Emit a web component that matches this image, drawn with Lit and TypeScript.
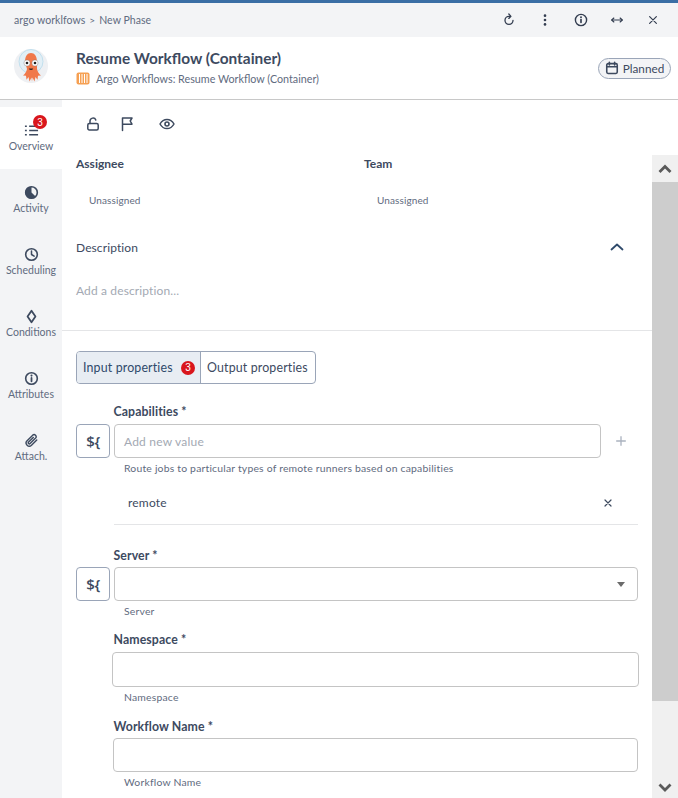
import { LitElement, html, css, svg } from "lit";
import { customElement } from "lit/decorators.js";

const I = (body: unknown, size = 16, cls = "") => html`<svg class=${cls} width=${size} height=${size} viewBox="0 0 16 16" fill="none" stroke="currentColor" stroke-width="1.5" stroke-linecap="round" stroke-linejoin="round">${body}</svg>`;

const navItems = [
  { label: "Overview", active: true, badge: true, icon: svg`<path d="M5.500 3.500h9.500M5.500 8h9.500M5.500 12.500h9.500" stroke-width="1.700" stroke-linecap="butt"/><path d="M1 3.500h2M1 8h2M1 12.500h2" stroke-width="1.700" stroke-linecap="butt"/>` },
  { label: "Activity", icon: svg`<circle cx="8" cy="8" r="6.200" stroke-width="1.700"/><path d="M8 8V1.800A6.200 6.200 0 0 0 4 13 6.200 6.200 0 0 0 12.400 12.300z" fill="currentColor" stroke="none"/>` },
  { label: "Scheduling", icon: svg`<circle cx="8" cy="8" r="6.200" stroke-width="1.700"/><path d="M8 4.200V8l2.800 1.800" stroke-width="1.600"/>` },
  { label: "Conditions", icon: svg`<path d="M8 1.800 12.200 8 8 14.200 3.800 8z" stroke-width="1.900"/>` },
  { label: "Attributes", icon: svg`<circle cx="8" cy="8" r="6.200" stroke-width="1.700"/><path d="M8 7.400v3.600" stroke-width="1.900"/><circle cx="8" cy="4.900" r="1.100" fill="currentColor" stroke="none"/>` },
  { label: "Attach.", icon: svg`<path d="M13.600 7.400 8 13a3.300 3.300 0 0 1-4.700-4.700l6-6a2.200 2.200 0 0 1 3.100 3.100l-5.900 5.900a1.100 1.100 0 0 1-1.600-1.600l5-5" stroke-width="1.500"/>` },
];

@customElement("app-root")
export class AppRoot extends LitElement {
  static styles = css`
    :host { display: block; width: 678px; height: 798px; overflow: hidden; font-family: Lato, "Open Sans", sans-serif; color: #3d4a5f; background: #fff; }
    * { box-sizing: border-box; }
    svg { display: block; }
    .accent { height: 3px; background: #3a6ea5; }
    .crumbs { height: 34px; background: #f3f4f6; display: flex; align-items: center; padding-left: 14px; font-size: 10.5px; color: #5f6b80; letter-spacing: .05px; }
    .crumbs .sep { margin: 0 4px; font-size: 10px; }
    .top-icons { margin-left: auto; display: flex; align-items: center; color: #333d50; padding-right: 7px; }
    .top-icons span { width: 36px; display: flex; justify-content: center; }
    .header { height: 63px; border-bottom: 1px solid #c8c8c8; display: flex; align-items: center; position: relative; }
    .logo { margin-left: 14px; width: 34px; height: 34px; margin-top: -4px; }
    .titles { margin-left: 28px; margin-top: -2px; }
    .title { font-size: 15.4px; font-weight: 700; color: #3d4a5f; line-height: 20px; }
    .sub { display: flex; align-items: center; gap: 5px; font-size: 10.75px; color: #5f6b80; line-height: 16px; margin-top: 3px; }
    .pill { margin-left: auto; margin-right: 7px; width: 73px; height: 21px; border: 1px solid #9aa5b8; border-radius: 11px; background: #f3f4f6; display: flex; align-items: center; justify-content: center; gap: 4px; font-size: 11.75px; color: #3d4a5f; }
    .pill svg { stroke-width: 1.8; }
    .body { display: flex; height: 698px; }
    .side { width: 62px; background: #f3f4f6; padding-top: 7px; flex: none; }
    .nav { height: 62px; display: flex; flex-direction: column; align-items: center; padding-top: 16px; font-size: 10.5px; color: #5f6b80; position: relative; }
    .nav svg { color: #3d4a5f; margin-bottom: 2px; }
    .nav.active { background: #fff; }
    .nav-badge { position: absolute; left: 33px; top: 8px; }
    .badge { width: 14px; height: 14px; border-radius: 50%; background: #d9161c; color: #fff; font-size: 10px; display: flex; align-items: center; justify-content: center; font-family: "Liberation Sans", sans-serif; }
    .main { flex: 1; min-width: 0; display: flex; flex-direction: column; }
    .actions { height: 55px; flex: none; display: flex; align-items: center; padding: 0 0 7px 23px; color: #3d4a5f; gap: 18px; }
    .actions svg:last-child { margin-left: 6px; }
    .split { flex: 1; min-height: 0; display: flex; }
    .content { flex: 1; min-width: 0; overflow: hidden; }
    .people { display: flex; padding: 2px 0 0 14px; height: 84px; }
    .people > div { width: 288.5px; }
    .h { font-size: 12px; font-weight: 700; color: #3d4a5f; line-height: 14px; }
    .un { font-size: 10px; color: #5f6b80; padding: 22px 0 0 13px; line-height: 14px; letter-spacing: .1px; }
    .desc-row { display: flex; align-items: center; justify-content: space-between; padding: 0 27px 0 14px; height: 16px; font-size: 12px; color: #3d4a5f; letter-spacing: .1px; }
    .desc-row svg { color: #2f4a6b; }
    .add { font-size: 12px; color: #a3a9b3; padding-left: 14px; margin-top: 28px; line-height: 16px; height: 47px; letter-spacing: .13px; }
    .divider { height: 1px; background: #e4e5e7; }
    .tabs { display: inline-flex; margin: 20px 0 0 14px; height: 33px; border: 1px solid #9aa5b8; border-radius: 4px; overflow: hidden; font-size: 12.4px; letter-spacing: .15px; vertical-align: top; }
    .tab { display: flex; align-items: center; padding: 0 6px; color: #3d4a5f; }
    .tab + .tab { padding-right: 7px; }
    .tab.on { background: #e8edf3; color: #2f4a6b; border-right: 1px solid #9aa5b8; width: 124px; justify-content: space-between; padding-right: 5px; }
    .form { padding: 20px 14px 0 14px; }
    .label { font-size: 12.3px; font-weight: 700; color: #3d4a5f; padding-left: 37.5px; line-height: 16px; letter-spacing: .1px; }
    .field { display: flex; align-items: center; margin-top: 4px; height: 34px; gap: 4px; }
    .field.tight { margin-top: 3px; }
    .expr { width: 34px; height: 34px; flex: none; border: 1px solid #9aa5b8; border-radius: 4px; display: flex; align-items: center; justify-content: center; font-size: 15px; font-weight: 600; color: #3d4a5f; font-family: "Open Sans", sans-serif; letter-spacing: -.5px; }
    .input { flex: 1; min-width: 0; height: 34px; border: 1px solid #c4c4c4; border-radius: 4px; display: flex; align-items: center; padding-left: 9px; font-size: 12px; color: #a3a9b3; letter-spacing: .2px; position: relative; }
    .plus { width: 37px; flex: none; display: flex; justify-content: center; color: #aab2bf; margin: 0 -1px 0 -3px; }
    .caret { position: absolute; right: 12px; top: 14px; width: 0; height: 0; border: 4.5px solid transparent; border-top: 5px solid #6b6b6b; border-bottom: 0; }
    .help { font-size: 10.4px; color: #5f6b80; padding-left: 48px; line-height: 12px; margin-top: 4px; letter-spacing: .2px; }
    .chip { margin: 11px 0 0 38px; display: flex; align-items: center; justify-content: space-between; padding: 0 25px 4px 14px; font-size: 12px; color: #3d4a5f; border-bottom: 1px solid #e4e5e7; letter-spacing: .2px; height: 40px; }
    .chip svg { color: #3d4a5f; margin-right: -1px; }
    .sp-server { margin-top: 23px; }
    .sp-ns { margin-top: 15px; }
    .sp-wf { margin-top: 16px; }
    .bare { margin: 4px -1px 0 36px; height: 35px; flex: none; }
    .bare2 { margin: 3px 0 0 37px; height: 34px; flex: none; }
    .bar { width: 26px; flex: none; background: #cdcdcd; display: flex; flex-direction: column; justify-content: space-between; position: relative; }
    .btn { height: 27px; background: #f0f0f0; display: flex; align-items: center; justify-content: center; color: #5a5a5a; }
    .btn.dn { height: 97px; align-items: flex-end; padding-bottom: 3px; }
  `;

  render() {
    return html`
      <div class="accent"></div>
      <div class="crumbs">
        <span>argo worklfows</span><span class="sep">&gt;</span><span>New Phase</span>
        <div class="top-icons">
          <span>${I(svg`<path d="M12.600 8.400A4.600 4.600 0 1 1 8 3.800h1.500"/><path d="M7.800 1.200 10.200 3.800 7.800 6.200" fill="none"/>`, 14)}</span>
          <span>${I(svg`<circle cx="8" cy="3" r="1.500" fill="currentColor" stroke="none"/><circle cx="8" cy="8" r="1.500" fill="currentColor" stroke="none"/><circle cx="8" cy="13" r="1.500" fill="currentColor" stroke="none"/>`, 14)}</span>
          <span>${I(svg`<circle cx="8" cy="8" r="6.400" stroke-width="1.600"/><path d="M8 7.500v3.400" stroke-width="1.900"/><circle cx="8" cy="4.900" r="1.100" fill="currentColor" stroke="none"/>`, 14)}</span>
          <span>${I(svg`<path d="M2 8h12" stroke-width="1.200"/><path d="M4.400 5.800 2 8l2.400 2.200M11.600 5.800 14 8l-2.400 2.200" stroke-width="1.400"/>`, 14)}</span>
          <span>${I(svg`<path d="M3.500 3.500l9 9M12.500 3.500l-9 9" stroke-width="1.600"/>`, 12)}</span>
        </div>
      </div>
      <div class="header">
        <svg class="logo" viewBox="0 0 34 34">
          <circle cx="17" cy="17" r="17" fill="#eef0f3"/>
          <circle cx="17" cy="12.500" r="12" fill="#e2eff6" stroke="#bcdcec" stroke-width=".9"/>
          <path d="M11 13c0-6 2.500-9 6-9s6 3 6 9v7c.6 3 2 5 4 6.500l-3 .3-.5 4-2-2.800-1 4.500-2-4-.5 4-.5-4-2 4-1-4.500-2 2.800-.5-4-3-.3c2-1.500 3.400-3.500 4-6.500z" fill="#f0784a"/>
          <circle cx="13" cy="14" r="3.100" fill="#fff" stroke="#777" stroke-width=".4"/><circle cx="21" cy="14" r="3.100" fill="#fff" stroke="#777" stroke-width=".4"/>
          <circle cx="13" cy="14" r="1.300" fill="#222"/><circle cx="21" cy="14" r="1.300" fill="#222"/>
          <path d="M14.800 19.500c.8 2 3.600 2 4.400 0z" fill="#3a2a24"/>
        </svg>
        <div class="titles">
          <div class="title">Resume Workflow (Container)</div>
          <div class="sub">
            <svg width="15" height="13" viewBox="0 0 15 13"><rect x=".5" y=".5" width="13" height="12" rx="2" fill="#f6a052"/><path d="M3.500 2v9M6 2v9M8.500 2v9M11 2v9" stroke="#fff" stroke-width="1"/></svg>
            <span>Argo Workflows: Resume Workflow (Container)</span>
          </div>
        </div>
        <div class="pill">
          ${I(svg`<rect x="2" y="3" width="12" height="11.200" rx="1.500"/><path d="M2 6.500h12M5 1.500v3M11 1.500v3"/>`, 14)}
          <span>Planned</span>
        </div>
      </div>
      <div class="body">
        <nav class="side">
          ${navItems.map((n) => html`
            <div class="nav ${n.active ? "active" : ""}">
              ${I(n.icon, 15)}
              <span>${n.label}</span>
              ${n.badge ? html`<div class="badge nav-badge">3</div>` : ""}
            </div>`)}
        </nav>
        <div class="main">
          <div class="actions">
            ${I(svg`<rect x="2.800" y="7.500" width="10.400" height="6.500" rx="1.500"/><path d="M5 7.500V5a3 3 0 0 1 5.800-1"/>`, 16)}
            ${I(svg`<path d="M3.500 14.500v-12.500h9.500l-1.800 3 1.800 3.200h-9.500"/>`, 16)}
            ${I(svg`<path d="M1 8s2.600-4.600 7-4.600S15 8 15 8s-2.600 4.600-7 4.600S1 8 1 8z"/><circle cx="8" cy="8" r="2" stroke-width="1.600"/>`, 16)}
          </div>
          <div class="split">
            <div class="content">
              <div class="people">
                <div><div class="h">Assignee</div><div class="un">Unassigned</div></div>
                <div><div class="h">Team</div><div class="un">Unassigned</div></div>
              </div>
              <div class="desc-row"><span>Description</span>${I(svg`<path d="M2.500 10.500 8 5.500l5.500 5" stroke-width="1.800"/>`, 16)}</div>
              <div class="add">Add a description...</div>
              <div class="divider"></div>
              <div class="tabs">
                <div class="tab on"><span>Input properties</span><div class="badge">3</div></div>
                <div class="tab"><span>Output properties</span></div>
              </div>
              <div class="form">
                <div class="label">Capabilities *</div>
                <div class="field">
                  <div class="expr">\${</div>
                  <div class="input">Add new value</div>
                  <div class="plus">${I(svg`<path d="M8 2.500v11M2.500 8h11" stroke-width="1.500" stroke-linecap="butt"/>`, 14)}</div>
                </div>
                <div class="help">Route jobs to particular types of remote runners based on capabilities</div>
                <div class="chip"><span>remote</span>${I(svg`<path d="M4 4l8 8M12 4l-8 8" stroke-width="1.600"/>`, 12)}</div>
                <div class="label sp-server">Server *</div>
                <div class="field tight">
                  <div class="expr">\${</div>
                  <div class="input"><span class="caret"></span></div>
                </div>
                <div class="help">Server</div>
                <div class="label sp-ns">Namespace *</div>
                <div class="input bare"></div>
                <div class="help">Namespace</div>
                <div class="label sp-wf">Workflow Name *</div>
                <div class="input bare2"></div>
                <div class="help">Workflow Name</div>
              </div>
            </div>
            <div class="bar">
              <div class="btn">${I(svg`<path d="M2.500 11 8 5.500l5.500 5.500" stroke-width="2.800" stroke-linecap="butt" stroke-linejoin="miter"/>`, 16)}</div>
              <div class="btn dn">${I(svg`<path d="M2.500 5.500 8 11l5.500-5.500" stroke-width="2.800" stroke-linecap="butt" stroke-linejoin="miter"/>`, 16)}</div>
            </div>
          </div>
        </div>
      </div>
    `;
  }
}
